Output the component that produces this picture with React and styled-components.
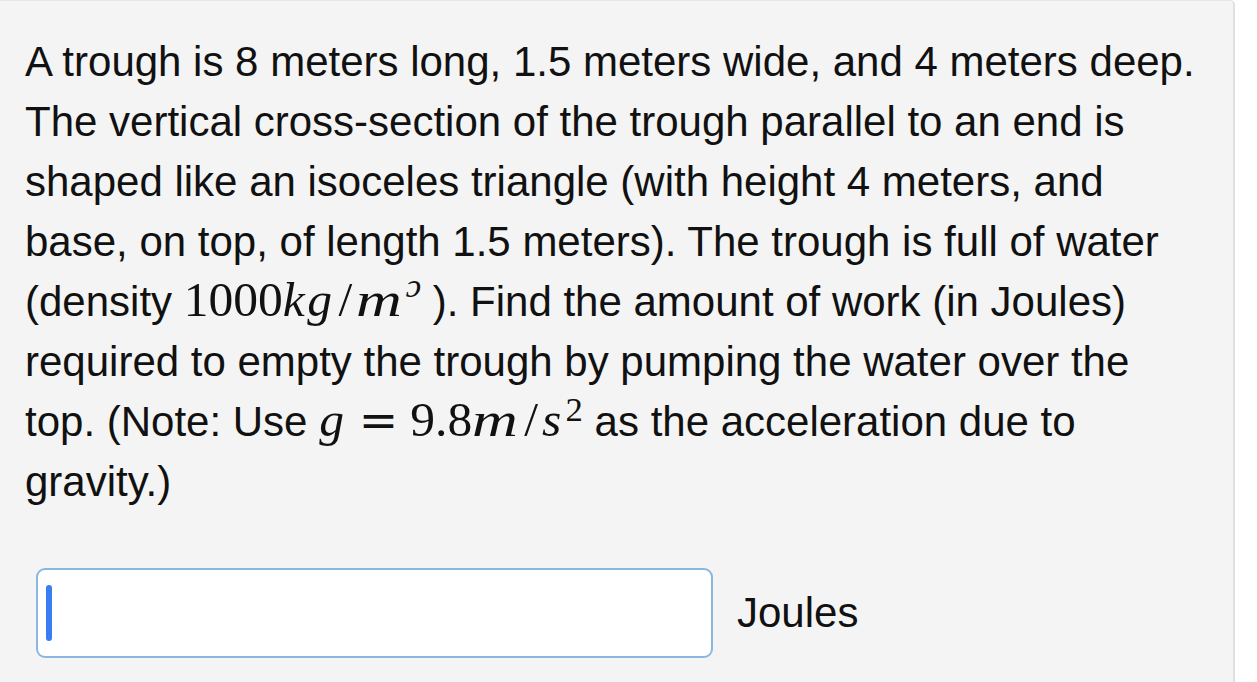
import React from "react";
import styled, { createGlobalStyle } from "styled-components";

const Global = createGlobalStyle`
  html, body { margin: 0; padding: 0; background: #ffffff; }
  body { font-family: "Liberation Sans", Arial, sans-serif; }
`;

const Panel = styled.div`
  box-sizing: border-box;
  width: 1235px;
  height: 682px;
  background: #f4f4f4;
  border-top: 1px solid #e6e6e6;
  border-right: 2px solid #e0e0e0;
  border-top-right-radius: 5px;
  padding: 31px 0 0 25px;
`;

const Question = styled.p`
  margin: 0;
  font-size: 42px;
  line-height: 60px;
  color: #111;
  white-space: nowrap;
`;

const Math = styled.span`
  font-family: "Liberation Serif", "DejaVu Serif", serif;
  font-size: 1.18em;
  line-height: 0;
`;

const V = styled.i`
  font-style: italic;
  display: inline-block;
  transform-origin: left center;
  transform: scaleX(${(p) => p.$sx || 1});
  margin-right: ${(p) => p.$gap || "0.05em"};
`;

const Sup = styled.sup`
  font-size: 0.7em;
  font-style: ${(p) => (p.$italic ? "italic" : "normal")};
  vertical-align: ${(p) => p.$raise || "0.42em"};
  line-height: 0;
  margin-left: 0.05em;
`;

const Slash = styled.span`
  margin: 0 0.08em;
`;

const Op = styled.span`
  font-family: "DejaVu Sans", sans-serif;
  font-size: 0.95em;
  margin: 0 0.26em;
`;

const AnswerRow = styled.div`
  display: flex;
  align-items: center;
  gap: 24px;
  margin-top: 56px;
  margin-left: 11px;
`;

const InputBox = styled.div`
  box-sizing: border-box;
  width: 677px;
  height: 90px;
  background: #ffffff;
  border: 2px solid #8cb6e2;
  border-radius: 9px;
  display: flex;
  align-items: center;
  padding-left: 8px;
`;

const Caret = styled.div`
  width: 6px;
  height: 56px;
  border-radius: 3px;
  background: #3a7cf2;
`;

const Unit = styled.span`
  font-size: 42px;
  color: #111;
`;

export default function App() {
  return (
    <>
      <Global />
      <Panel>
        <Question>
          A trough is 8 meters long, 1.5 meters wide, and 4 meters deep.
          <br />
          The vertical cross-section of the trough parallel to an end is
          <br />
          shaped like an isoceles triangle (with height 4 meters, and
          <br />
          base, on top, of length 1.5 meters). The trough is full of water
          <br />
          (density{" "}
          <Math>
            1000<V>k</V><V>g</V><Slash>/</Slash><V $sx={1.28} $gap="0.24em">m</V>
            <Sup $italic $raise="0.55em">ɔ</Sup>
          </Math>{" "}
          ). Find the amount of work (in Joules)
          <br />
          required to empty the trough by pumping the water over the
          <br />
          top. (Note: Use{" "}
          <Math>
            <V>g</V>
            <Op>=</Op>9.8<V $sx={1.28} $gap="0.25em">m</V><Slash>/</Slash><V>s</V>
            <Sup>2</Sup>
          </Math>{" "}
          as the acceleration due to
          <br />
          gravity.)
        </Question>
        <AnswerRow>
          <InputBox>
            <Caret />
          </InputBox>
          <Unit>Joules</Unit>
        </AnswerRow>
      </Panel>
    </>
  );
}
